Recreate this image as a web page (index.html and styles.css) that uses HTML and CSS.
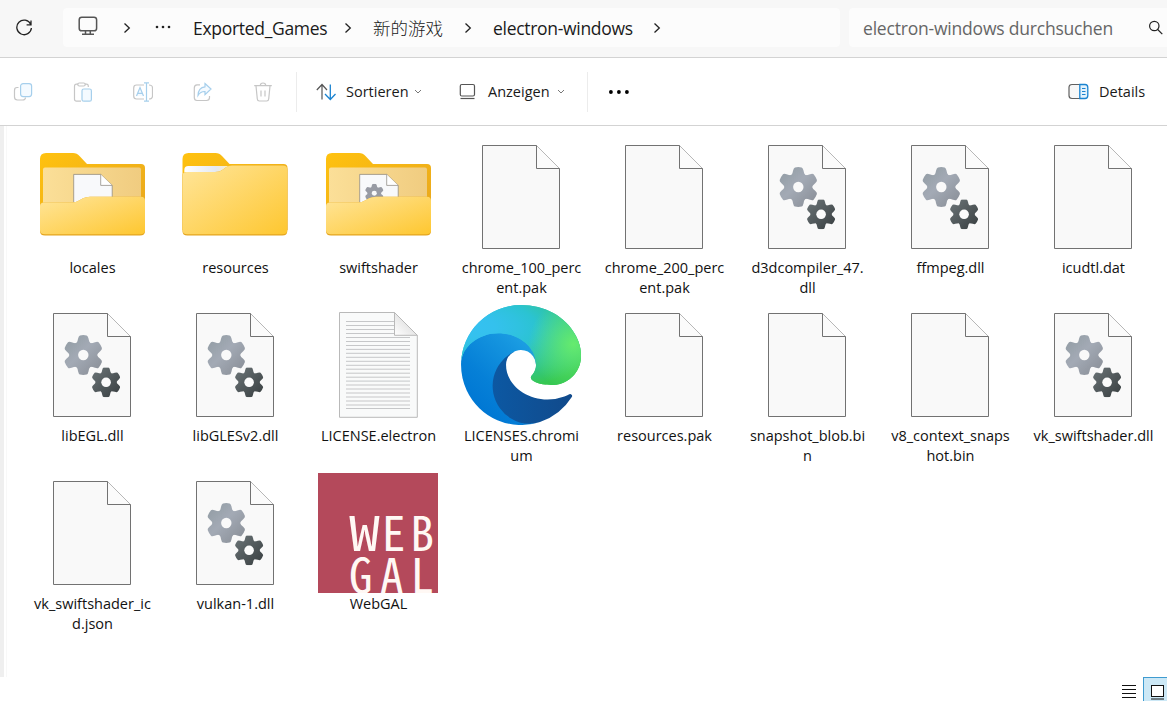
FILE: index.html
```
<!DOCTYPE html>
<html lang="de">
<head>
<meta charset="utf-8">
<title>electron-windows</title>
<link rel="stylesheet" href="styles.css">
</head>
<body>
<svg class="defs" width="0" height="0">
  <defs>
    <linearGradient id="gLight" x1="0" y1="0" x2="1" y2="1"><stop offset="0" stop-color="#8f9aa1"/><stop offset=".45" stop-color="#a3aab5"/><stop offset="1" stop-color="#868b93"/></linearGradient>
    <linearGradient id="gDark" x1="0" y1="0" x2="1" y2="1"><stop offset="0" stop-color="#6d7679"/><stop offset="1" stop-color="#373d3f"/></linearGradient>
    <linearGradient id="gBack" x1="0" y1="0" x2="1" y2="1"><stop offset="0" stop-color="#ffc20f"/><stop offset="1" stop-color="#e6a420"/></linearGradient>
    <linearGradient id="gFront" x1="0" y1="0" x2="1" y2="1"><stop offset="0" stop-color="#ffe59a"/><stop offset="1" stop-color="#fec730"/></linearGradient>
    <linearGradient id="gPanel" x1="0" y1="0" x2="1" y2="0"><stop offset="0" stop-color="#fbdf98"/><stop offset="1" stop-color="#f0cc80"/></linearGradient>
    <linearGradient id="gStrip" x1="0" y1="0" x2="1" y2="0"><stop offset="0" stop-color="#ffffff"/><stop offset=".7" stop-color="#e4e9f2"/><stop offset="1" stop-color="#fbeec6"/></linearGradient>
    <linearGradient id="gFold" x1="0" y1="1" x2="1" y2="0"><stop offset="0" stop-color="#fff"/><stop offset="1" stop-color="#cfcfcf"/></linearGradient>
    <linearGradient id="e1" x1="63" y1="178" x2="241" y2="178" gradientUnits="userSpaceOnUse"><stop offset="0" stop-color="#0c59a4"/><stop offset="1" stop-color="#114a8b"/></linearGradient>
    <linearGradient id="e2" x1="157" y1="104" x2="46" y2="225" gradientUnits="userSpaceOnUse"><stop offset="0" stop-color="#1b9de2"/><stop offset=".16" stop-color="#1595df"/><stop offset=".67" stop-color="#0680d7"/><stop offset="1" stop-color="#0078d4"/></linearGradient>
    <radialGradient id="e3" cx="0" cy="0" r="202" gradientTransform="matrix(-.04 1 -2.13 -.08 30.9 51)" gradientUnits="userSpaceOnUse"><stop offset="0" stop-color="#35c1f1"/><stop offset=".11" stop-color="#34c1ed"/><stop offset=".23" stop-color="#2fc2df"/><stop offset=".31" stop-color="#2bc3d2"/><stop offset=".67" stop-color="#36c752"/></radialGradient>
    <radialGradient id="e4" cx="245" cy="88" r="97" gradientUnits="userSpaceOnUse"><stop offset="0" stop-color="#66eb6e"/><stop offset="1" stop-color="#66eb6e" stop-opacity="0"/></radialGradient>
    <radialGradient id="e5" cx="161" cy="69" r="95" gradientTransform="matrix(1 0 0 .95 -65 68)" gradientUnits="userSpaceOnUse"><stop offset=".76" stop-opacity="0"/><stop offset=".95" stop-opacity=".35"/><stop offset="1" stop-opacity=".5"/></radialGradient>
    <mask id="cog" maskUnits="userSpaceOnUse" x="-21" y="-21" width="42" height="42">
      <circle r="14" fill="#fff"/>
      <g id="teeth" fill="#fff">
        <path id="tooth" d="M-7-11.5Q-5.6-13.5-5.2-16.5Q-4.6-19.3-3.3-19.6Q0-20.2 3.3-19.6Q4.6-19.3 5.2-16.5Q5.6-13.5 7-11.5Z"/>
        <use href="#tooth" transform="rotate(60)"/><use href="#tooth" transform="rotate(120)"/><use href="#tooth" transform="rotate(180)"/><use href="#tooth" transform="rotate(240)"/><use href="#tooth" transform="rotate(300)"/>
      </g>
      <circle r="5.2" fill="#000"/>
    </mask>
    <symbol id="page" viewBox="0 0 120 120">
      <path d="M21.5 8.5h54l23 23v80h-77z" fill="#f9f9f9" stroke="#727272"/>
      <path d="M75.500 8.500v23h23" fill="#fbfbfb" stroke="#727272"/>
    </symbol>
    <symbol id="dll" viewBox="0 0 120 120">
      <use href="#page" width="120" height="120"/>
      <g transform="translate(51.300 50)"><rect x="-20" y="-20" width="40" height="40" fill="url(#gLight)" mask="url(#cog)"/></g>
      <g transform="translate(74.100 77.300) scale(.75)"><rect x="-20" y="-20" width="40" height="40" fill="url(#gDark)" mask="url(#cog)"/><circle r="6.400" fill="#fbfbfb"/></g>
    </symbol>
    <symbol id="folder-back" viewBox="0 0 120 120">
      <path d="M8 22q0-6 6-6h27q4 0 6.500 3l7.500 8h54q4 0 4 4v62H8z" fill="url(#gBack)"/>
      <path d="M11 32.500q0-2 2-2h94q2 0 2 2V80H11z" fill="url(#gPanel)"/>
    </symbol>
    <symbol id="folder-page" viewBox="0 0 120 120">
      <path d="M41.700 37.400h27l11.500 11v28H41.700z" fill="#f8f9fb" stroke="#85817a" stroke-width=".7"/>
      <path d="M68.700 37.400v11h11.500" fill="#fff" stroke="#85817a" stroke-width=".7"/>
    </symbol>
    <symbol id="folder-front" viewBox="0 0 120 120">
      <path d="M8 69q0-3.500 4-3.500h28q4 0 7-2l4-2.200q3-1.600 7-1.600h51q4 0 4 4V94q0 4.500-5 4.500H13q-5 0-5-4.500z" fill="#e4a51f"/>
      <path d="M8 69q0-3.500 4-3.500h28q4 0 7-2l4-2.200q3-1.600 7-1.600h51q4 0 4 4V93q0 4.300-5 4.300H13q-5 0-5-4.300z" fill="url(#gFront)"/>
    </symbol>
  </defs>
</svg>

<header class="nav">
  <button class="reload"><svg width="18" height="18" viewBox="0 0 18 18"><path d="M15.700 5.200A7.300 7.300 0 1 0 16.400 9M16 1.500v4.300h-4.400" class="ln"/></svg></button>
  <nav class="address">
    <svg class="pc" width="20" height="20" viewBox="0 0 20 20"><rect x="1.200" y="1.200" width="17.400" height="13.600" rx="2.600" fill="none" stroke="#555" stroke-width="1.500"/><path d="M7.500 15v3M12.300 15v3M4 18.200h12" fill="none" stroke="#555" stroke-width="1.500"/></svg>
    <svg class="chev c1" width="8" height="12" viewBox="0 0 8 12"><path d="M1.500 1.500 6.300 6l-4.800 4.500" class="ln"/></svg>
    <svg class="dots" width="16" height="4" viewBox="0 0 16 4"><circle cx="2" cy="2" r="1.300"/><circle cx="8" cy="2" r="1.300"/><circle cx="14" cy="2" r="1.300"/></svg>
    <span class="crumb games">Exported_Games</span>
    <svg class="chev" width="8" height="12" viewBox="0 0 8 12"><path d="M1.500 1.500 6.300 6l-4.800 4.500" class="ln"/></svg>
    <span class="crumb zh">新的游戏</span>
    <svg class="chev" width="8" height="12" viewBox="0 0 8 12"><path d="M1.500 1.500 6.300 6l-4.800 4.500" class="ln"/></svg>
    <span class="crumb current">electron-windows</span>
    <svg class="chev" width="8" height="12" viewBox="0 0 8 12"><path d="M1.500 1.500 6.300 6l-4.800 4.500" class="ln"/></svg>
  </nav>
  <div class="search"><span>electron-windows durchsuchen</span><svg width="16" height="16" viewBox="0 0 16 16"><circle cx="6.300" cy="6" r="4.700" class="ln thin"/><path d="m9.700 9.500 4.600 4.700" class="ln thin"/></svg></div>
</header>

<div class="toolbar">
  <div class="actions">
    <svg width="20" height="20" viewBox="0 0 20 20"><path d="M5.500 5.500H4Q1.500 5.500 1.500 8.500V15q0 3 3 3h5q3 0 3-2.500" class="off"/><rect x="7.600" y="1.600" width="11" height="13" rx="2.500" class="off blue"/></svg>
    <svg width="20" height="20" viewBox="0 0 20 20"><path d="M8 19.200H3.500q-2 0-2-2v-13q0-2 2-2H5M12 2.200h1.500q1.800 0 1.800 2V5" class="off"/><rect x="4.800" y="1" width="7.400" height="3" rx="1.500" class="off"/><rect x="9" y="7" width="9.400" height="12.200" rx="1.800" class="off blue"/></svg>
    <svg width="20" height="20" viewBox="0 0 20 20"><path d="M11 3H3.500Q.7 3 .7 6v8q0 3 2.800 3H11M16 3q3.500 0 3.500 3v8q0 3-3.500 3" class="off"/><path d="M3.500 14 7 5.500 10.500 14M4.700 11.300h4.600M13.500 1v18.200M11 .8h5M11 19.200h5" class="off blue"/></svg>
    <svg width="20" height="20" viewBox="0 0 20 20"><path d="M7 2.800H4Q1.300 2.800 1.300 6v9.500q0 3 2.700 3h9.500q3 0 3-3V14" class="off"/><path d="M12 1.500 18 7l-6 5.600V9.500Q7.500 9.300 5 13.500 5.200 5.500 12 4.800z" class="off blue"/></svg>
    <svg width="20" height="20" viewBox="0 0 20 20"><path d="M1.200 3.700h17.600M3 4l1.300 13q.2 2 2 2h7.400q1.800 0 2-2L17 4M7.300 3.500Q7.300 1 10 1t2.700 2.500M8 8.500v6M12 8.500v6" class="off"/></svg>
  </div>
  <div class="group">
    <svg class="sort-icon" width="20" height="18" viewBox="0 0 20 18"><path d="M6 16.500V1.500M.8 7 6 1.500 11 7" fill="none" stroke="#555" stroke-width="1.200"/><path d="M14.300 1.500v15M9 11l5.300 5.500L19.500 11" fill="none" stroke="#1a83d0" stroke-width="1.300"/></svg>
    <span class="sort">Sortieren</span>
    <svg class="down" width="8" height="6" viewBox="0 0 8 6"><path d="m1 1 3 3 3-3" fill="none" stroke="#777"/></svg>
    <svg class="view-icon" width="17" height="17" viewBox="0 0 17 17"><rect x="1.300" y="1.500" width="14.200" height="11.500" rx="1.500" fill="none" stroke="#555" stroke-width="1.200"/><path d="M1.500 15.500h14" stroke="#555" stroke-width="1.200"/></svg>
    <span class="view">Anzeigen</span>
    <svg class="down" width="8" height="6" viewBox="0 0 8 6"><path d="m1 1 3 3 3-3" fill="none" stroke="#777"/></svg>
  </div>
  <svg class="more" width="22" height="6" viewBox="0 0 22 6"><circle cx="2.900" cy="3" r="1.900"/><circle cx="10.900" cy="3" r="1.900"/><circle cx="18.900" cy="3" r="1.900"/></svg>
  <div class="details">
    <svg width="21" height="17" viewBox="0 0 21 17"><path d="M12 1.500H4q-3 0-3 3v8q0 3 3 3h8" fill="#f7f7f7" stroke="#606060" stroke-width="1.200"/><path d="M11.800 1.500H17q2.800 0 2.800 3v8q0 3-2.800 3h-5.200z" fill="#e3f2fc" stroke="#1a83d0" stroke-width="1.300"/><path d="M14 5.500h3.500M14 8.500h3.500M14 11.500h3.500" stroke="#1a83d0"/></svg>
    <span>Details</span>
  </div>
</div>

<main class="content">
  <div class="edge-strip"></div>
  <div class="files">
    <div class="file"><svg class="icon"><use href="#folder-back"/><use href="#folder-page"/><use href="#folder-front"/></svg><p>locales</p></div>
    <div class="file"><svg class="icon"><path d="M7.500 22q0-6 6-6h27q4 0 6.500 3l7.500 8h54q4 0 4 4v62h-105z" fill="url(#gBack)"/><path d="M9.300 33q0-4 4-4H54l-4 7H9.300z" fill="url(#gStrip)"/><path d="M7.500 39q0-4 4-4H40q5 0 8-2.500l3-2.300q2.500-1.700 6-1.700h51q4.300 0 4.300 4V94q0 4.500-5 4.500h-95q-4.800 0-4.800-4.500z" fill="#e4a51f"/><path d="M7.500 39q0-4 4-4H40q5 0 8-2.500l3-2.300q2.500-1.700 6-1.700h51q4.300 0 4.300 4V93q0 4.300-5 4.300h-95q-4.800 0-4.800-4.300z" fill="url(#gFront)"/></svg><p>resources</p></div>
    <div class="file"><svg class="icon"><use href="#folder-back"/><use href="#folder-page"/><g transform="translate(56.300 56.300) scale(.48)"><rect x="-20" y="-20" width="40" height="40" fill="#989ba4" mask="url(#cog)"/></g><use href="#folder-front"/></svg><p>swiftshader</p></div>
    <div class="file"><svg class="icon"><use href="#page"/></svg><p>chrome_100_perc<br>ent.pak</p></div>
    <div class="file"><svg class="icon"><use href="#page"/></svg><p>chrome_200_perc<br>ent.pak</p></div>
    <div class="file"><svg class="icon"><use href="#dll"/></svg><p>d3dcompiler_47.<br>dll</p></div>
    <div class="file"><svg class="icon"><use href="#dll"/></svg><p>ffmpeg.dll</p></div>
    <div class="file"><svg class="icon"><use href="#page"/></svg><p>icudtl.dat</p></div>

    <div class="file"><svg class="icon"><use href="#dll"/></svg><p>libEGL.dll</p></div>
    <div class="file"><svg class="icon"><use href="#dll"/></svg><p>libGLESv2.dll</p></div>
    <div class="file"><svg class="icon"><path d="M21.500 7.500h55l22.800 22.800v82H21.500z" fill="#f9fafa" stroke="#b9b9b9"/><path d="M28 16.500h48M28 20.500h48M28 24.500h48M28 28.500h48M28 32.500h64M28 36.500h64M28 40.500h64M28 44.400h64M28 48.300h64M28 52.300h64M28 56.300h64M28 60.300h64M28 64.200h64M28 68.200h64M28 72.200h64M28 76.100h64M28 80h64M28 84h64M28 88h64M28 92h64M28 96h64M28 100h64M28 103.500h64" stroke="#bfc1c3" stroke-width=".9"/><path d="M76.500 7.500v22.800h22.800z" fill="url(#gFold)" stroke="#b9b9b9"/></svg><p>LICENSE.electron</p></div>
    <div class="file"><svg class="icon"><g transform="scale(.46875) translate(-4.630 -4.920)">
      <path fill="url(#e1)" d="M235.680 195.460a93.730 93.730 0 0 1-10.540 4.710 101.870 101.870 0 0 1-35.900 6.460c-47.320 0-88.540-32.550-88.540-74.320A31.480 31.480 0 0 1 117.130 105c-42.800 1.800-53.800 46.400-53.800 72.530 0 73.880 68.090 81.370 82.760 81.370 7.910 0 19.840-2.300 27-4.560l1.310-.44A128.340 128.340 0 0 0 241 201.100a4 4 0 0 0-5.320-5.640z"/>
      <path id="wave" fill="url(#e2)" d="M110.340 246.340A79.200 79.200 0 0 1 87.600 225a80.720 80.720 0 0 1 29.530-120c3.120-1.470 8.450-4.130 15.540-4a32.350 32.350 0 0 1 25.690 13 31.880 31.880 0 0 1 6.360 18.660c0-.21 24.460-79.600-80-79.600-43.900 0-80 41.660-80 78.210a130.150 130.150 0 0 0 12.110 56 128 128 0 0 0 156.380 67.110 75.550 75.550 0 0 1-62.780-8z"/>
      <path id="crest" fill="url(#e3)" d="M156.940 153.780c-.81 1.050-3.300 2.500-3.300 5.660 0 2.610 1.700 5.120 4.720 7.230 14.380 10 41.490 8.680 41.560 8.680a59.560 59.560 0 0 0 30.270-8.350 61.380 61.380 0 0 0 30.430-52.880c.26-22.410-8-37.310-11.340-43.910-21.190-41.450-66.930-65.290-116.670-65.290a128 128 0 0 0-128 126.200c.48-36.540 36.800-66.050 80-66.050 3.500 0 23.460.34 42 10.070 16.340 8.580 24.900 18.940 30.850 29.210 6.180 10.670 7.280 24.150 7.280 29.520s-2.740 13.330-7.800 19.910z"/>
      <use href="#crest" style="fill:url(#e4)"/><path fill="url(#e4)" d="M156.940 153.780c-.81 1.050-3.300 2.500-3.300 5.660 0 2.610 1.700 5.120 4.720 7.230 14.380 10 41.490 8.680 41.560 8.680a59.560 59.560 0 0 0 30.270-8.350 61.380 61.380 0 0 0 30.430-52.880c.26-22.410-8-37.310-11.340-43.910-21.190-41.450-66.930-65.290-116.670-65.290z"/>
    </g></svg><p>LICENSES.chromi<br>um</p></div>
    <div class="file"><svg class="icon"><use href="#page"/></svg><p>resources.pak</p></div>
    <div class="file"><svg class="icon"><use href="#page"/></svg><p>snapshot_blob.bi<br>n</p></div>
    <div class="file"><svg class="icon"><use href="#page"/></svg><p>v8_context_snaps<br>hot.bin</p></div>
    <div class="file"><svg class="icon"><use href="#dll"/></svg><p>vk_swiftshader.dll</p></div>

    <div class="file"><svg class="icon"><use href="#page"/></svg><p>vk_swiftshader_ic<br>d.json</p></div>
    <div class="file"><svg class="icon"><use href="#dll"/></svg><p>vulkan-1.dll</p></div>
    <div class="file"><svg class="icon"><rect width="120" height="120" fill="#b4495b"/><g class="logo"><text x="31" y="78" textLength="31" lengthAdjust="spacingAndGlyphs">W</text><text x="64" y="78">E</text><text x="92.500" y="78">B</text><text x="31" y="119.500" textLength="30">G</text><text x="62" y="119.500">A</text><text x="92.500" y="119.500">L</text></g></svg><p>WebGAL</p></div>
  </div>
</main>

<footer class="status">
  <svg width="14" height="14" viewBox="0 0 14 14"><path d="M0 .5h14M0 4.500h14M0 8.500h14M0 12.500h14" stroke="#111"/></svg>
  <div class="tiles"><svg width="13" height="16" viewBox="0 0 13 16"><rect x=".5" y=".5" width="12" height="11" fill="#fff" stroke="#111"/><path d="M0 14h13" stroke="#111"/></svg></div>
</footer>
</body>
</html>
```

FILE: styles.css
```
* { box-sizing: border-box; }
body {
  margin: 0;
  width: 1167px;
  height: 701px;
  overflow: hidden;
  display: flex;
  flex-direction: column;
  background: #fff;
  color: #1a1a1a;
  font: 14.5px/20px "Open Sans", "Noto Sans", "Noto Sans CJK SC", sans-serif;
  font-stretch: 90%;
}
svg { display: block; flex: none; }
.defs { position: absolute; }
.ln { fill: none; stroke: #222; stroke-width: 1.3; }
.thin { stroke-width: 1.2; }
.off { fill: none; stroke: #c6c6c6; stroke-width: 1.2; }
.off.blue { stroke: #a6cfec; fill: #f4faff; }

.nav {
  flex: none;
  height: 58px;
  display: flex;
  align-items: flex-start;
  padding-top: 8px;
  background: #f7f7f7;
  border-bottom: 1px solid #d3d3d3;
}
.reload {
  width: 63px;
  height: 39px;
  padding: 0 0 0 15px;
  border: 0;
  background: none;
  display: flex;
  align-items: center;
}
.address {
  width: 777px;
  height: 39px;
  display: flex;
  align-items: center;
  padding-left: 15px;
  border-radius: 4px;
  background: #fcfcfc;
}
.pc { margin-top: -3px; }
.chev { margin-right: 21px; }
.chev.c1 { margin: 0 24px 0 25px; }
.dots { margin: -2px 22px 0 0; fill: #222; }
.crumb { flex: none; white-space: nowrap; font-size: 17.5px; line-height: 24px; }
.games { width: 151px; letter-spacing: -.3px; }
.zh { width: 91px; font: 300 17.5px/24px "Noto Sans CJK SC", sans-serif; }
.current { width: 160px; letter-spacing: -.3px; }
.search {
  width: 318px;
  height: 39px;
  margin-left: 9px;
  padding-left: 14px;
  display: flex;
  align-items: center;
  border-radius: 4px 0 0 4px;
  background: #fcfcfc;
  color: #666;
  font-size: 17.5px;
  letter-spacing: -.2px;
}
.search span { width: 285px; white-space: nowrap; }

.toolbar {
  flex: none;
  height: 68px;
  display: flex;
  align-items: center;
  border-bottom: 1px solid #d3d3d3;
}
.actions { width: 296px; display: flex; gap: 40px; padding-left: 13px; }
.group {
  width: 292px;
  height: 40px;
  display: flex;
  align-items: center;
  padding-left: 19px;
  border: solid #ececec;
  border-width: 0 1px;
}
.sort { width: 68px; margin-left: 10px; }
.view { width: 69px; margin-left: 12px; }
.view-icon { margin-left: 37px; }
.more { margin-left: 20px; }
.details { width: 99px; margin-left: auto; display: flex; align-items: center; gap: 10px; }

.content { flex: none; height: 551px; display: flex; }
.edge-strip { width: 4px; background: #efefef; }
.files {
  margin-left: 2px;
  padding: 11px 0 0 26px;
  display: grid;
  grid-template-columns: repeat(8, 120px);
  grid-auto-rows: 168px;
  column-gap: 23px;
  align-content: start;
  border-left: 1px solid #f8f8f8;
  margin-right: -8px;
  padding-left: 25px;
}
.file { display: flex; flex-direction: column; align-items: center; }
.icon { width: 120px; height: 120px; }
.file p { margin: 1px 0 0 1px; text-align: center; white-space: nowrap; color: #111; }
.logo {
  fill: #fff8f4;
  font: 500 47px "Noto Sans Mono CJK SC", "Noto Sans CJK SC", sans-serif;
}

.status {
  flex: 1;
  display: flex;
  justify-content: flex-end;
}
.status > svg { margin: 8px 7px 0 0; }
.tiles {
  width: 24px;
  height: 24px;
  padding: 7px 0 0 7px;
  background: #cce8f6;
  border: solid #3f9bd0;
  border-width: 1px 0 0 1px;
}
```
